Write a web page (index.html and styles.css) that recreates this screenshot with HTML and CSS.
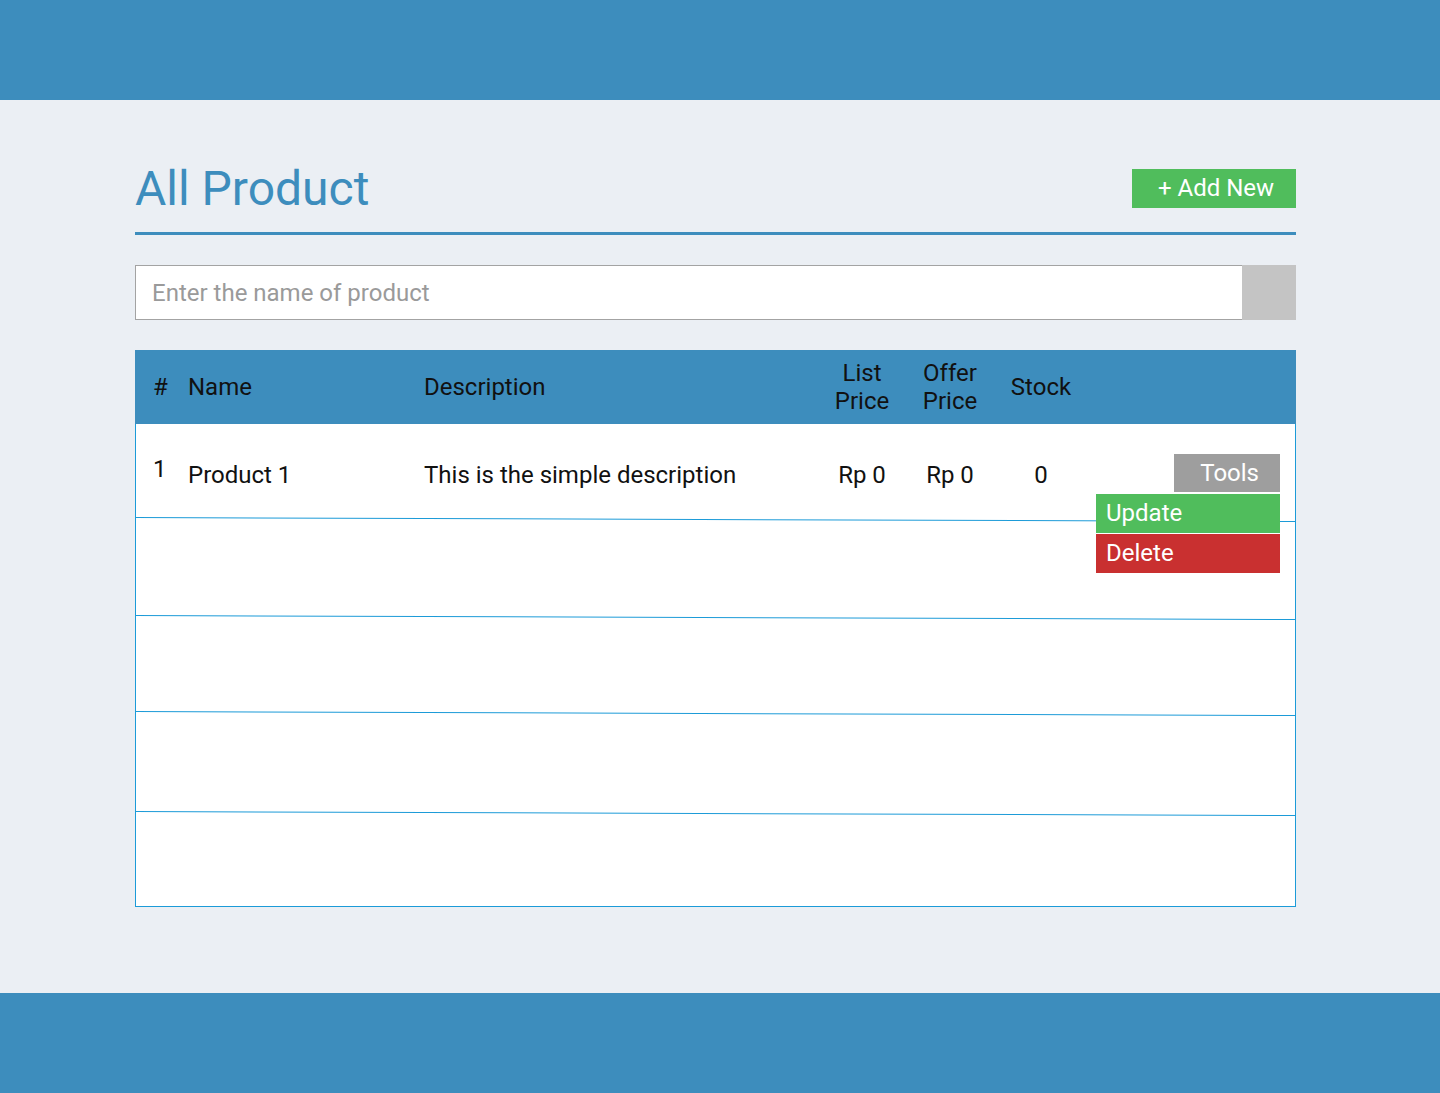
FILE: index.html
```html
<!DOCTYPE html>
<html>
<head>
<meta charset="utf-8">
<link rel="stylesheet" href="styles.css">
</head>
<body>
<header class="topbar"></header>
<main class="content">
  <div class="title-row">
    <h1 class="title">All Product</h1>
    <button class="add-btn">+ Add New</button>
  </div>
  <div class="search">
    <input class="search-input" type="text" placeholder="Enter the name of product">
    <button class="search-btn"></button>
  </div>
  <div class="table">
    <div class="thead">
      <div class="c c-num">#</div>
      <div class="c c-name">Name</div>
      <div class="c c-desc">Description</div>
      <div class="c c-ctr">List<br>Price</div>
      <div class="c c-ctr">Offer<br>Price</div>
      <div class="c c-ctr">Stock</div>
      <div class="c"></div>
    </div>
    <div class="row r1">
      <div class="c c-num num-up">1</div>
      <div class="c c-name">Product 1</div>
      <div class="c c-desc">This is the simple description</div>
      <div class="c c-ctr">Rp 0</div>
      <div class="c c-ctr">Rp 0</div>
      <div class="c c-ctr">0</div>
      <div class="c c-tools">
        <button class="tools-btn">Tools</button>
        <div class="menu">
          <div class="menu-item update">Update</div>
          <div class="menu-item delete">Delete</div>
        </div>
      </div>
    </div>
    <div class="row r2"></div>
    <div class="row r3"></div>
    <div class="row r4"></div>
    <div class="row r5 last"></div>
  </div>
</main>
<footer class="bottombar"></footer>
</body>
</html>
```
FILE: styles.css
```css
* { box-sizing: border-box; }
html, body { margin: 0; padding: 0; }
body {
  background: #ebeff4;
  font-family: Roboto, "Noto Sans", sans-serif;
  color: #111;
  height: 1093px;
  display: flex;
  flex-direction: column;
  overflow: hidden;
}
.topbar { height: 100px; background: #3d8dbd; flex: none; }
.bottombar { height: 100px; background: #3d8dbd; flex: none; }
.content {
  flex: 1;
  padding: 0 144px 0 135px;
}
.title-row {
  display: flex;
  justify-content: space-between;
  align-items: flex-start;
  height: 135px;
  padding-top: 69px;
  border-bottom: 3px solid #3d8dbd;
}
.title {
  margin: -9px 0 0 0;
  font-weight: 400;
  font-size: 48px;
  line-height: 58px;
  color: #3d8dbd;
}
.add-btn {
  border: none;
  background: #50bd5c;
  color: #fff;
  font-family: Roboto, sans-serif;
  font-size: 24px;
  height: 39px;
  width: 164px;
  padding: 0 0 0 4px;
  line-height: 39px;
}
.search {
  display: flex;
  margin-top: 30px;
  height: 55px;
}
.search-input {
  flex: 1;
  border: 1px solid #a3a3a3;
  border-right: none;
  background: #fff;
  font-family: Roboto, sans-serif;
  font-size: 24px;
  padding: 0 16px;
  outline: none;
}
.search-input::placeholder { color: #9a9a9a; }
.search-btn {
  width: 54px;
  border: none;
  background: #c4c4c4;
}
.table {
  margin-top: 30px;
  background: #fff;
  border: 1px solid #1c9bd8;
  border-top: none;
}
.thead, .row {
  display: grid;
  grid-template-columns: 52px 236px 394px 88px 88px 94px 1fr;
  align-items: center;
}
.thead {
  background: #3d8dbd;
  height: 74px;
  margin: 0 -1px;
  padding-left: 1px;
  font-size: 24px;
  line-height: 28px;
  color: #111;
}
.c-num { padding-left: 17px; }
.c-ctr { text-align: center; white-space: nowrap; }
.row {
  position: relative;
  font-size: 24px;
  color: #111;
}
.row::after {
  content: "";
  position: absolute;
  left: -1px;
  right: -1px;
  bottom: -1px;
  height: 1px;
  background: #1c9bd8;
  transform: skewY(0.2deg);
  transform-origin: left center;
}
.row.last::after { display: none; }
.r1 { height: 93px; padding-top: 8px; }
.r2 { height: 98px; }
.r3 { height: 96px; }
.r4 { height: 100px; }
.r5 { height: 95px; }
.c-desc, .c-name { white-space: nowrap; }
.num-up { position: relative; top: -6px; }
.c-tools {
  position: relative;
  display: flex;
  justify-content: flex-end;
  padding-right: 15px;
  align-self: start;
  padding-top: 22px;
}
.tools-btn {
  border: none;
  background: #9e9e9e;
  color: #fff;
  font-family: Roboto, sans-serif;
  font-size: 24px;
  width: 106px;
  height: 38px;
  padding: 0 21px 0 0;
  text-align: right;
  line-height: 38px;
}
.menu {
  position: absolute;
  right: 15px;
  top: 62px;
  width: 184px;
  z-index: 2;
}
.menu-item {
  height: 39px;
  line-height: 38px;
  color: #fff;
  font-size: 24px;
  padding-left: 10px;
  margin-bottom: 1px;
}
.update { background: #50bd5c; }
.delete { background: #c93030; }
```
